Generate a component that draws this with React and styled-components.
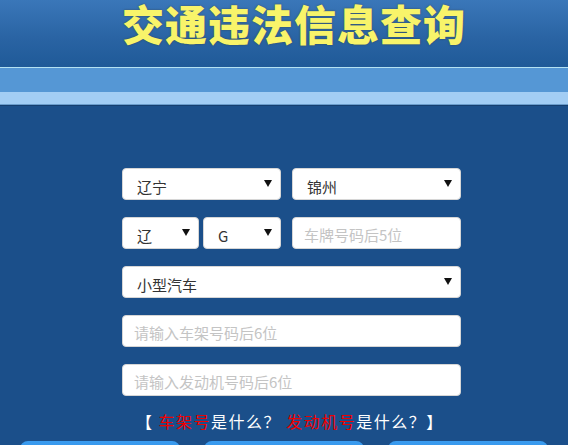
import styled, { createGlobalStyle } from "styled-components";

const GlobalStyle = createGlobalStyle`
  html, body {
    margin: 0;
    padding: 0;
    background: #1b4f8a;
  }
  body {
    font-family: "Noto Sans CJK SC", "Noto Sans", sans-serif;
    overflow: hidden;
  }
`;

const Page = styled.div`
  width: 568px;
  height: 445px;
  background: #1b4f8a;
  overflow: hidden;
`;

const Header = styled.header`
  height: 67px;
  background: linear-gradient(to bottom, #3a77b9 0%, #2a64a4 55%, #1f5a98 100%);
  display: flex;
  justify-content: center;
  align-items: center;
`;

const Title = styled.h1`
  margin: -21px 0 0 20px;
  font-family: "Noto Sans CJK SC", sans-serif;
  font-weight: 900;
  font-size: 42px;
  line-height: 44px;
  letter-spacing: 1px;
  color: #f8f46a;
  text-shadow: 0 0 2px rgba(60, 50, 20, 0.6);
`;

const Stripe = styled.div`
  height: ${(p) => p.h}px;
  background: ${(p) => p.bg};
`;

const Form = styled.form`
  width: 339px;
  margin: 62px 0 0 122px;
  display: flex;
  flex-direction: column;
  gap: 17px;
`;

const Row = styled.div`
  display: flex;
  gap: ${(p) => p.gap || 11}px;
`;

const SelectBox = styled.div`
  box-sizing: border-box;
  height: 32px;
  width: ${(p) => (p.w ? `${p.w}px` : "auto")};
  flex: ${(p) => (p.w ? "none" : 1)};
  background: #fff;
  border: 1px solid #d6d6d6;
  border-radius: 4px;
  display: flex;
  align-items: center;
  justify-content: space-between;
  padding: 0 8px 0 14px;
  color: #333;
  font-size: 15px;
`;

const SelectText = styled.span`
  padding-top: 5px;
`;

const Arrow = styled.svg`
  width: 8px;
  height: 8px;
  margin-top: -3px;
`;

const Input = styled.input`
  box-sizing: border-box;
  height: 32px;
  width: 100%;
  flex: ${(p) => (p.$grow ? 1 : "none")};
  min-width: 0;
  background: #fff;
  border: 1px solid #d6d6d6;
  border-radius: 4px;
  padding: 2px 11px 0;
  font-size: 15px;
  font-family: inherit;
  color: #333;
  outline: none;
  &::placeholder {
    color: #c4c4c4;
  }
`;

const Help = styled.div`
  margin: 14px 0 0 136px;
  font-size: 16px;
  line-height: 22px;
  letter-spacing: 1.5px;
  color: #fff;
  white-space: nowrap;
`;

const Red = styled.span`
  color: #ee0000;
`;

const Buttons = styled.div`
  margin-top: 9px;
  padding-left: 20px;
  display: flex;
  gap: 24px;
`;

const Button = styled.div`
  width: 160px;
  height: 30px;
  border-radius: 8px 8px 0 0;
  background: linear-gradient(to bottom, #3a9cf0, #2a86dc);
`;

const Select = ({ children, w }) => (
  <SelectBox w={w}>
    <SelectText>{children}</SelectText>
    <Arrow viewBox="0 0 8 8">
      <path d="M0 1 L8 1 L4 8 Z" fill="#111" />
    </Arrow>
  </SelectBox>
);

export default function App() {
  return (
    <Page>
      <GlobalStyle />
      <Header>
        <Title>交通违法信息查询</Title>
      </Header>
      <Stripe h={1} bg="#b4e2f2" />
      <Stripe h={24} bg="#5597d5" />
      <Stripe h={12} bg="#a2cdf4" />
      <Stripe h={1} bg="#6b9dcc" />
      <Stripe h={1} bg="#153f70" />
      <Form onSubmit={(e) => e.preventDefault()}>
        <Row>
          <Select w={159}>辽宁</Select>
          <Select>锦州</Select>
        </Row>
        <Row>
          <Row gap={4}>
            <Select w={77}>辽</Select>
            <Select w={78}>G</Select>
          </Row>
          <Input $grow placeholder="车牌号码后5位" />
        </Row>
        <Row>
          <Select>小型汽车</Select>
        </Row>
        <Input placeholder="请输入车架号码后6位" />
        <Input placeholder="请输入发动机号码后6位" />
      </Form>
      <Help>
        【 <Red>车架号</Red>是什么？ <Red>发动机号</Red>是什么？】
      </Help>
      <Buttons>
        <Button />
        <Button />
        <Button />
      </Buttons>
    </Page>
  );
}
